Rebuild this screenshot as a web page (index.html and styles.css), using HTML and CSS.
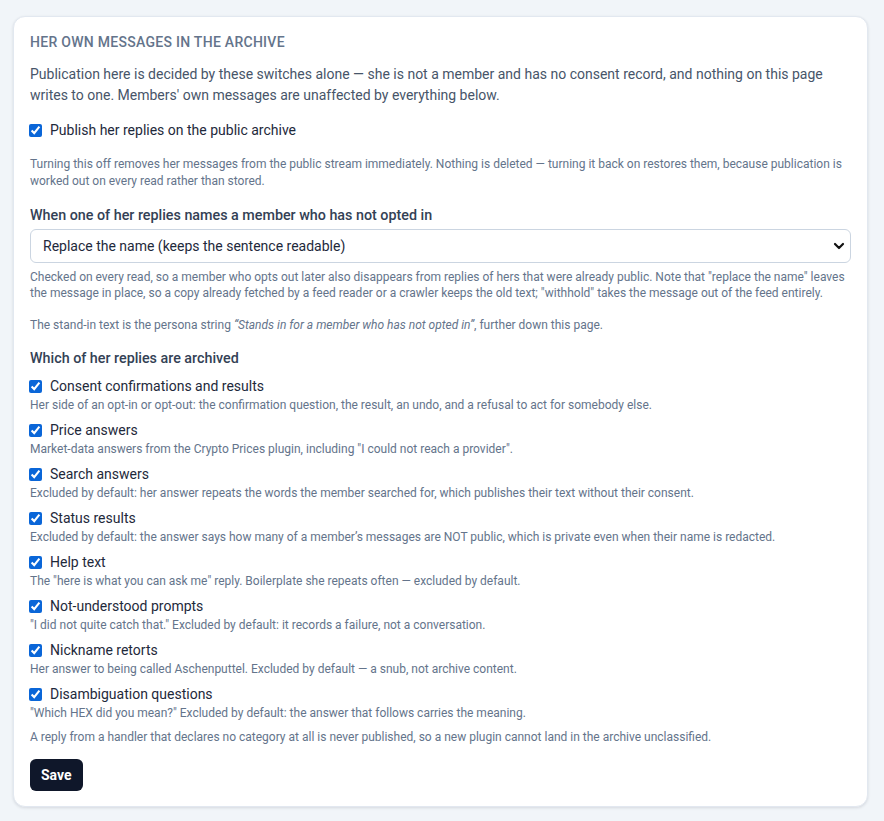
FILE: index.html
```html
<!DOCTYPE html>
<html lang="en">

<head>
    <meta charset="UTF-8">
    <meta name="viewport" content="width=device-width, initial-scale=1.0">
    <title>Archive settings</title>
    <link rel="stylesheet" href="styles.css">
</head>

<body>
    <form class="card">
        <h2 class="card__title">Her own messages in the archive</h2>
        <p class="card__lead">Publication here is decided by these switches alone — she is not a member and has no
            consent record, and nothing on this page writes to one. Members' own messages are unaffected by everything
            below.</p>

        <label class="check check--main">
            <input type="checkbox" checked>
            <span>Publish her replies on the public archive</span>
        </label>
        <p class="hint hint--spaced">Turning this off removes her messages from the public stream immediately. Nothing is
            deleted — turning it back on restores them, because publication is worked out on every read rather than
            stored.</p>

        <h3 class="field-title">When one of her replies names a member who has not opted in</h3>
        <div class="select-wrap">
            <select class="select">
                <option>Replace the name (keeps the sentence readable)</option>
                <option>Withhold the message</option>
            </select>
            <svg class="select-wrap__arrow" width="12" height="8" viewBox="0 0 12 8">
                <path d="M2 2l4 4 4-4" fill="none" stroke="#111" stroke-width="2.2" stroke-linecap="round"
                    stroke-linejoin="round" />
            </svg>
        </div>
        <p class="hint hint--tight">Checked on every read, so a member who opts out later also disappears from replies of
            hers that were already public. Note that "replace the name" leaves the message in place, so a copy already
            fetched by a feed reader or a crawler keeps the old text; "withhold" takes the message out of the feed
            entirely.</p>
        <p class="hint hint--tight hint--gap">The stand-in text is the persona string <em>“Stands in for a member who has
                not opted in”</em>, further down this page.</p>

        <h3 class="field-title field-title--list">Which of her replies are archived</h3>
        <ul class="categories">
            <li>
                <label class="check"><input type="checkbox" checked><span>Consent confirmations and results</span></label>
                <p class="hint hint--tight">Her side of an opt-in or opt-out: the confirmation question, the result, an
                    undo, and a refusal to act for somebody else.</p>
            </li>
            <li>
                <label class="check"><input type="checkbox" checked><span>Price answers</span></label>
                <p class="hint hint--tight">Market-data answers from the Crypto Prices plugin, including "I could not
                    reach a provider".</p>
            </li>
            <li>
                <label class="check"><input type="checkbox" checked><span>Search answers</span></label>
                <p class="hint hint--tight">Excluded by default: her answer repeats the words the member searched for,
                    which publishes their text without their consent.</p>
            </li>
            <li>
                <label class="check"><input type="checkbox" checked><span>Status results</span></label>
                <p class="hint hint--tight">Excluded by default: the answer says how many of a member’s messages are NOT
                    public, which is private even when their name is redacted.</p>
            </li>
            <li>
                <label class="check"><input type="checkbox" checked><span>Help text</span></label>
                <p class="hint hint--tight">The "here is what you can ask me" reply. Boilerplate she repeats often —
                    excluded by default.</p>
            </li>
            <li>
                <label class="check"><input type="checkbox" checked><span>Not-understood prompts</span></label>
                <p class="hint hint--tight">"I did not quite catch that." Excluded by default: it records a failure, not
                    a conversation.</p>
            </li>
            <li>
                <label class="check"><input type="checkbox" checked><span>Nickname retorts</span></label>
                <p class="hint hint--tight">Her answer to being called Aschenputtel. Excluded by default — a snub, not
                    archive content.</p>
            </li>
            <li>
                <label class="check"><input type="checkbox" checked><span>Disambiguation questions</span></label>
                <p class="hint hint--tight">"Which HEX did you mean?" Excluded by default: the answer that follows
                    carries the meaning.</p>
            </li>
        </ul>
        <p class="hint hint--tight hint--note">A reply from a handler that declares no category at all is never
            published, so a new plugin cannot land in the archive unclassified.</p>

        <button type="button" class="btn">Save</button>
    </form>
</body>

</html>
```

FILE: styles.css
```css
* {
    box-sizing: border-box;
}

body {
    margin: 0;
    padding: 16px 16px 14px 13px;
    background-color: #f1f5f9;
    font-family: Roboto, "Noto Sans", sans-serif;
    color: #1e293b;
}

.card {
    background-color: #fff;
    border: 1px solid #e2e8f0;
    border-radius: 12px;
    box-shadow: 0 1px 3px rgba(15, 23, 42, 0.12);
    padding: 15px 16px 15px 16px;
}

.card__title {
    margin: 0;
    font-size: 14px;
    line-height: 20px;
    font-weight: 500;
    text-transform: uppercase;
    letter-spacing: 0.02em;
    color: #64748b;
}

.card__lead {
    margin: 12px 0 0;
    font-size: 14px;
    line-height: 21px;
    color: #475569;
}

.check {
    display: flex;
    align-items: center;
    gap: 8px;
    font-size: 14px;
    line-height: 20px;
    color: #1e293b;
    cursor: pointer;
}

.check input {
    width: 13px;
    height: 13px;
    margin: 0 0 0 -1px;
    accent-color: #0a66d8;
}

.check--main {
    margin-top: 14px;
}

.hint {
    margin: 0;
    font-size: 12px;
    line-height: 17px;
    color: #64748b;
}

.hint--spaced {
    margin-top: 16px;
}

.hint--tight {
    line-height: 16px;
}

.hint--gap {
    margin-top: 16px;
}

.hint em {
    font-style: italic;
}

.field-title {
    margin: 15px 0 0;
    font-size: 14.3px;
    line-height: 20px;
    font-weight: 500;
    color: #334155;
}

.field-title--list {
    margin-top: 15px;
}

.select-wrap {
    position: relative;
    margin-top: 4px;
}

.select {
    width: 100%;
    height: 34px;
    padding: 0 30px 0 12px;
    border: 1px solid #cbd5e1;
    border-radius: 6px;
    background-color: #fff;
    font-family: inherit;
    font-size: 14px;
    color: #1e293b;
    appearance: none;
    -webkit-appearance: none;
}

.select-wrap__arrow {
    position: absolute;
    right: 6px;
    top: 13px;
    pointer-events: none;
}

.select-wrap+.hint {
    margin-top: 6px;
}

.categories {
    list-style: none;
    margin: 8px 0 0;
    padding: 0;
    display: flex;
    flex-direction: column;
    gap: 7px;
}

.categories .hint {
    margin-top: 1px;
}

.hint--note {
    margin-top: 8px;
}

.btn {
    margin-top: 14px;
    height: 32px;
    padding: 0 11px;
    border: none;
    border-radius: 6px;
    background-color: #0f172a;
    color: #fff;
    font-family: inherit;
    font-size: 14px;
    font-weight: 700;
    cursor: pointer;
}
```
